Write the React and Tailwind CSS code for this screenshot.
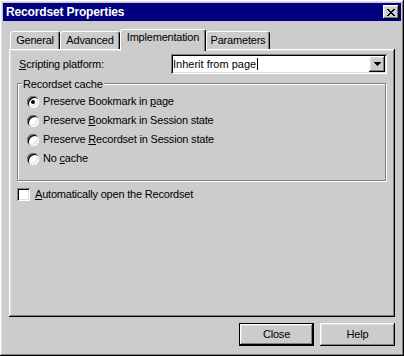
import React from "react";

const raised =
    "shadow-[inset_-1px_-1px_0_#000,inset_1px_1px_0_#fff,inset_-2px_-2px_0_#808080,inset_2px_2px_0_#dfdfdf]";
const sunken =
    "shadow-[inset_1px_1px_0_#808080,inset_-1px_-1px_0_#fff,inset_2px_2px_0_#000,inset_-2px_-2px_0_#dfdfdf]";

const Tab = ({ label, width, active }) => {
    if (active) {
        return (
            <div
                className={`relative z-10 -mb-[2px] h-[22px] ${width} flex justify-center pt-[1px] rounded-t-[3px] border-x border-t border-t-white border-l-white border-r-black bg-[#cccccc] shadow-[inset_-1px_0_0_#808080]`}
            >
                {label}
            </div>
        );
    }
    return (
        <div
            className={`h-[18px] ${width} flex justify-center pt-[2px] rounded-t-[3px] border-x border-t border-t-white border-l-white border-r-black shadow-[inset_-1px_0_0_#808080]`}
        >
            {label}
        </div>
    );
};

const Radio = ({ checked, children }) => (
    <div className="h-[19px] flex items-center">
        <div className={`w-[12px] h-[12px] rounded-full bg-white flex items-center justify-center ${sunken}`}>
            {checked && <div className="w-[4px] h-[4px] rounded-full bg-black" />}
        </div>
        <span className="ml-[4px]">{children}</span>
    </div>
);

const U = ({ children }) => <span className="underline">{children}</span>;

export default function App() {
    return (
        <div
            className={`w-[404px] h-[356px] bg-[#cccccc] p-[3px] flex flex-col text-[11px] leading-[13px] text-black tracking-[-0.2px] font-['Liberation_Sans',Arial,sans-serif] ${raised}`}
        >
            {/* Title bar */}
            <div className="h-[18px] bg-[#000080] flex items-center justify-between pl-[3px] pr-[2px]">
                <span className="text-white font-bold text-[12px] tracking-[-0.15px]">Recordset Properties</span>
                <div className={`w-[16px] h-[14px] bg-[#cccccc] flex items-center justify-center ${raised}`}>
                    <svg width="8" height="7" viewBox="0 0 8 7" shapeRendering="crispEdges">
                        <path
                            d="M0 0h2v1H0zM6 0h2v1H6zM1 1h2v1H1zM5 1h2v1H5zM2 2h4v1H2zM3 3h2v1H3zM2 4h4v1H2zM1 5h2v1H1zM5 5h2v1H5zM0 6h2v1H0zM6 6h2v1H6z"
                            fill="#000"
                        />
                    </svg>
                </div>
            </div>

            {/* Body */}
            <div className="flex flex-col px-[6px] pt-[8px]">
                {/* Tabs */}
                <div className="flex items-end h-[20px] pl-[1px]">
                    <Tab label="General" width="w-[50px]" />
                    <Tab label="Advanced" width="w-[60px]" />
                    <Tab label="Implementation" width="w-[86px]" active />
                    <Tab label="Parameters" width="w-[64px]" />
                </div>

                {/* Panel */}
                <div className={`h-[268px] flex flex-col pt-[5px] px-[8px] ${raised}`}>
                    <div className="h-[20px] flex items-center justify-between">
                        <span className="ml-[2px]">
                            <U>S</U>cripting platform:
                        </span>
                        <div className={`w-[216px] h-[20px] bg-white p-[2px] flex ${sunken}`}>
                            <div className="flex-1 flex items-center tracking-normal">
                                <span>Inherit from page</span>
                                <span className="ml-[1px] w-px h-[12px] bg-black" />
                            </div>
                            <div className={`w-[16px] bg-[#cccccc] flex items-center justify-center ${raised}`}>
                                <svg width="7" height="4" viewBox="0 0 7 4" shapeRendering="crispEdges">
                                    <path d="M0 0h7v1H0zM1 1h5v1H1zM2 2h3v1H2zM3 3h1v1H3z" fill="#000" />
                                </svg>
                            </div>
                        </div>
                    </div>

                    {/* Recordset cache group */}
                    <div className="relative mt-[9px] mr-[1px] h-[98px] border border-[#808080] shadow-[1px_1px_0_#fff,inset_1px_1px_0_#fff] pt-[8px] pl-[9px]">
                        <span className="absolute -top-[6px] left-[4px] px-[1px] bg-[#cccccc]">Recordset cache</span>
                        <Radio checked>
                            Preserve Bookmark in <U>p</U>age
                        </Radio>
                        <Radio>
                            Preserve <U>B</U>ookmark in Session state
                        </Radio>
                        <Radio>
                            Preserve <U>R</U>ecordset in Session state
                        </Radio>
                        <Radio>
                            No <U>c</U>ache
                        </Radio>
                    </div>

                    <div className="mt-[7px] h-[13px] flex items-center">
                        <div className={`w-[13px] h-[13px] bg-white ${sunken}`} />
                        <span className="ml-[5px]">
                            <U>A</U>utomatically open the Recordset
                        </span>
                    </div>
                </div>

                {/* Buttons */}
                <div className="mt-[6px] flex justify-end gap-[6px]">
                    <button className={`w-[75px] h-[23px] border border-black flex items-center justify-center ${raised}`}>
                        Close
                    </button>
                    <button className={`w-[75px] h-[23px] flex items-center justify-center ${raised}`}>
                        Help
                    </button>
                </div>
            </div>
        </div>
    );
}
